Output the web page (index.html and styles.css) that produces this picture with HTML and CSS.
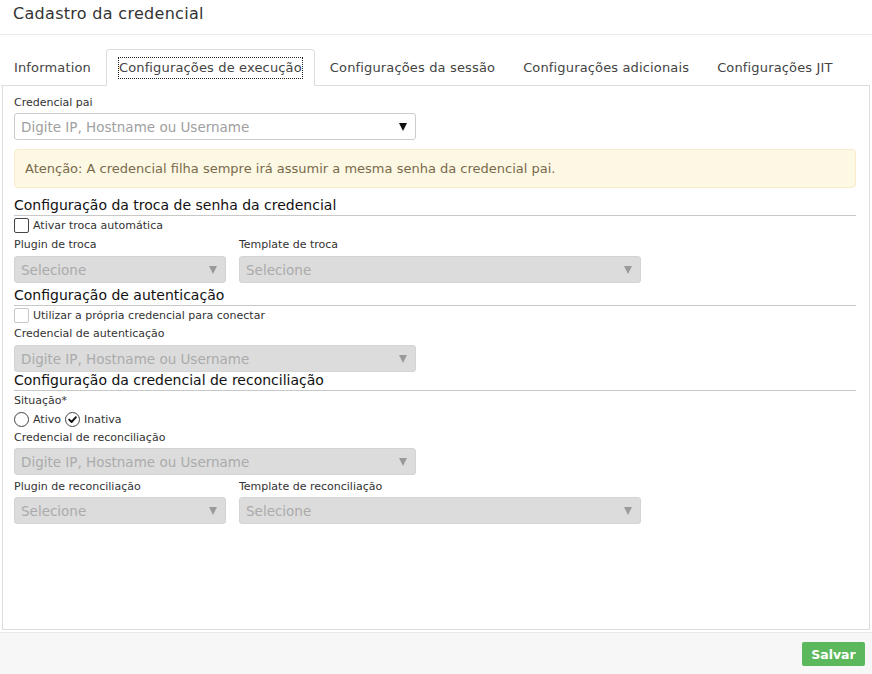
FILE: index.html
```html
<!DOCTYPE html>
<html lang="pt-BR">
<head>
<meta charset="utf-8">
<title>Cadastro da credencial</title>
<link rel="stylesheet" href="styles.css">
</head>
<body>
<div class="modal">
  <div class="header"><h1 class="title">Cadastro da credencial</h1></div>
  <div class="body">
    <ul class="tabs">
      <li class="tab">Information</li>
      <li class="tab active"><span class="focus">Configurações de execução</span></li>
      <li class="tab">Configurações da sessão</li>
      <li class="tab">Configurações adicionais</li>
      <li class="tab">Configurações JIT</li>
    </ul>
    <div class="panel">
      <label class="flabel">Credencial pai</label>
      <div class="select w-lg mt2"><span class="ph">Digite IP, Hostname ou Username</span><span class="caret"></span></div>
      <div class="alert">Atenção: A credencial filha sempre irá assumir a mesma senha da credencial pai.</div>

      <h2 class="section s1">Configuração da troca de senha da credencial</h2>
      <div class="check-row"><span class="box"></span><span>Ativar troca automática</span></div>
      <div class="row2 mt3">
        <div class="field"><label class="flabel">Plugin de troca</label><div class="select disabled w-sm mt3"><span class="ph">Selecione</span><span class="caret"></span></div></div>
        <div class="field"><label class="flabel">Template de troca</label><div class="select disabled w-lg mt3"><span class="ph">Selecione</span><span class="caret"></span></div></div>
      </div>

      <h2 class="section s2">Configuração de autenticação</h2>
      <div class="check-row"><span class="box box-off"></span><span>Utilizar a própria credencial para conectar</span></div>
      <label class="flabel mt2">Credencial de autenticação</label>
      <div class="select disabled w-lg mt3"><span class="ph">Digite IP, Hostname ou Username</span><span class="caret"></span></div>

      <h2 class="section s3">Configuração da credencial de reconciliação</h2>
      <label class="flabel mt2">Situação*</label>
      <div class="radio-row">
        <span class="radio"></span><span>Ativo</span>
        <span class="radio checked"><svg width="15" height="15" viewBox="0 0 15 15"><path d="M4.2 7.6 L6.6 10 L10.9 5.2" fill="none" stroke="#111" stroke-width="1.9" stroke-linecap="round" stroke-linejoin="round"/></svg></span><span>Inativa</span>
      </div>
      <label class="flabel mt2">Credencial de reconciliação</label>
      <div class="select disabled w-lg mt2"><span class="ph">Digite IP, Hostname ou Username</span><span class="caret"></span></div>
      <div class="row2 mt4">
        <div class="field"><label class="flabel">Plugin de reconciliação</label><div class="select disabled w-sm mt2"><span class="ph">Selecione</span><span class="caret"></span></div></div>
        <div class="field"><label class="flabel">Template de reconciliação</label><div class="select disabled w-lg mt2"><span class="ph">Selecione</span><span class="caret"></span></div></div>
      </div>
    </div>
  </div>
  <div class="footer"><button class="btn-save" type="button">Salvar</button></div>
</div>
</body>
</html>
```

FILE: styles.css
```css
* { box-sizing: border-box; }
html, body { margin: 0; padding: 0; }
body {
  font-family: "DejaVu Sans", "Liberation Sans", sans-serif;
  color: #333;
  background: #fff;
}
.modal {
  display: flex;
  flex-direction: column;
  height: 674px;
  width: 872px;
}
.header {
  height: 35px;
  border-bottom: 1px solid #e9e9ef;
  padding: 4px 13px 0;
}
.title {
  margin: 0;
  font-size: 16px;
  line-height: 20px;
  font-weight: normal;
  letter-spacing: 0.3px;
  color: #333;
}
.body {
  flex: 1;
  display: flex;
  flex-direction: column;
  padding-bottom: 2px;
}
.tabs {
  list-style: none;
  margin: 14px 2px 0 1px;
  padding: 0;
  display: flex;
  border-bottom: 1px solid #ddd;
}
.tab {
  height: 37px;
  margin-bottom: -1px;
  margin-right: 2px;
  padding: 0 12px;
  border: 1px solid transparent;
  border-radius: 4px 4px 0 0;
  font-size: 13px;
  line-height: 35px;
  letter-spacing: 0.15px;
  color: #444;
  white-space: nowrap;
}
.tab.active {
  border-color: #ddd #ddd transparent;
  background: #fff;
  color: #444;
}
.focus {
  display: inline-block;
  line-height: 20px;
  outline: 1px dotted #222;
}
.panel {
  flex: 1;
  margin: 0 2px 0 2px;
  border: 1px solid #ddd;
  border-top: none;
  padding: 9px 13px 0 11px;
}
.flabel {
  display: block;
  font-size: 11px;
  line-height: 16px;
  color: #333;
}
.mt2 { margin-top: 2px; }
.mt3 { margin-top: 3px; }
.mt4 { margin-top: 4px; }
.select {
  height: 27px;
  border: 1px solid #ccc;
  border-radius: 3px;
  background: #fff;
  display: flex;
  align-items: center;
  justify-content: space-between;
  padding: 0 8px 0 6px;
}
.select .ph {
  font-size: 13.5px;
  color: #a0a0a0;
  white-space: nowrap;
}
.caret {
  width: 0;
  height: 0;
  border-left: 4px solid transparent;
  border-right: 4px solid transparent;
  border-top: 8px solid #111;
}
.select.disabled {
  background: #dcdcdc;
  border-color: #d4d4d4;
}
.select.disabled .ph { color: #ababab; }
.select.disabled .caret { border-top-color: #9a9a9a; }
.w-lg { width: 402px; }
.w-sm { width: 212px; }
.alert {
  margin-top: 9px;
  height: 39px;
  border: 1px solid #faebcc;
  border-radius: 4px;
  background: #fcf8e3;
  padding: 0 10px;
  font-size: 13px;
  line-height: 37px;
  color: #7a6a4c;
}
.section {
  margin: 0;
  font-size: 14px;
  line-height: 19px;
  font-weight: normal;
  color: #111;
  border-bottom: 1px solid #c8c8c8;
}
.s1 { margin-top: 8px; }
.s2 { margin-top: 3px; }
.s3 { margin-top: -1px; }
.check-row, .radio-row {
  display: flex;
  align-items: center;
  height: 18px;
  gap: 4px;
  font-size: 11px;
  color: #333;
}
.box {
  width: 15px;
  height: 15px;
  border: 1px solid #444;
  border-radius: 2px;
  background: #fff;
}
.box.box-off { border-color: #c8c8c8; }
.radio-row { margin-top: 1px; }
.radio {
  width: 15px;
  height: 15px;
  border: 1px solid #444;
  border-radius: 50%;
  background: #fff;
  position: relative;
}
.radio svg { position: absolute; left: -1px; top: -1px; }
.row2 {
  display: grid;
  grid-template-columns: 225px 402px;
}
.footer {
  height: 42px;
  border-top: 1px solid #e9e9e9;
  background: #f7f7f7;
  display: flex;
  justify-content: flex-end;
  padding: 9px 7px 0 0;
}
.btn-save {
  width: 63px;
  height: 24px;
  border: none;
  border-radius: 2px;
  background: #5cb85c;
  color: #fff;
  font-family: "DejaVu Sans", "Liberation Sans", sans-serif;
  font-size: 12.5px;
  font-weight: 600;
  padding: 0;
}
```
